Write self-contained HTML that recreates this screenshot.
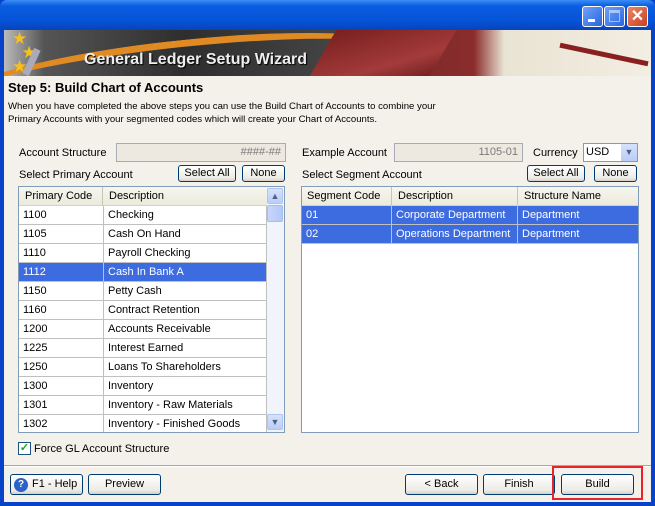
<!DOCTYPE html>
<html><head><style>
*{box-sizing:border-box;margin:0;padding:0}
body{width:655px;height:506px;overflow:hidden;font-family:"Liberation Sans",Arial,sans-serif;font-size:11px;background:#0842c8;position:relative;white-space:nowrap}
.abs{position:absolute}
.title{left:0;top:0;width:655px;height:30px;background:linear-gradient(#3b8df5,#0a5de0 20%,#0653d8 70%,#0843b8);border-radius:7px 7px 0 0}
.client{left:4px;top:30px;width:647px;height:472px;background:#f3f1ea}
.tb{top:6px;width:21px;height:21px;border:1px solid #fff;border-radius:3px;background:linear-gradient(135deg,#6fa2f8,#2a64e0)}
.banner{left:4px;top:30px;width:647px;height:46px;background:linear-gradient(90deg,#bbb 0,#555 40px,#2e2e2e 180px,#444 330px,#666 380px,#7a2a2a 400px,#8b2c2c 470px,#e9e3d3 500px,#f3eee2 647px);overflow:hidden}
.btn{position:absolute;height:21px;border:1px solid #003c74;border-radius:3px;background:linear-gradient(#fff,#ecebe6 80%,#d6d0c5);text-align:center;line-height:19px;font-size:11px;color:#000}
.grid{position:absolute;background:#fff;border:1px solid #7f9db9;overflow:hidden}
.hdr{position:absolute;top:0;height:19px;background:linear-gradient(#f7f6f0,#ebeadb);border-bottom:1px solid #d6d2c2;line-height:19px;padding-left:6px;color:#000}
.row{position:absolute;left:0;height:19px;line-height:18px;border-bottom:1px solid #c0c0c0}
.row span{position:absolute;top:0;height:19px;padding-left:4px;border-right:1px solid #c0c0c0}
.sel{background:#3d6be0;color:#fff}
.field{position:absolute;height:19px;border:1px solid #a5acb5;background:#ede9e0;color:#7a7a7a;text-align:right;padding-right:4px;line-height:17px}
</style></head><body>
<div class="abs title"></div>
<div class="abs tb" style="left:582px"><div style="position:absolute;left:5px;top:12px;width:7px;height:3px;background:#fff"></div></div>
<div class="abs tb" style="left:604px"><div style="position:absolute;left:4px;top:3px;width:11px;height:12px;border:1px solid #fff;border-top-width:3px;opacity:.5"></div></div>
<div class="abs tb" style="left:627px;background:linear-gradient(135deg,#e8886a,#c94020);color:#fff;font-weight:bold;font-size:16px;text-align:center;line-height:19px">✕</div>
<div class="abs client"></div>
<div class="abs banner">
 <div style="position:absolute;left:-60px;top:10px;width:480px;height:80px;border-top:7px solid #e08a24;border-radius:50%;transform:rotate(-6deg)"></div>
 <div style="position:absolute;left:80px;top:21px;font:bold 16px 'Liberation Sans',Arial,sans-serif;color:#eee;text-shadow:1px 1px 1px #000">General Ledger Setup Wizard</div>
 <div style="position:absolute;left:8px;top:2px;color:#f5c020;font-size:17px;line-height:14px">★<br>&nbsp;&nbsp;★<br>★</div>
 <div style="position:absolute;left:24px;top:18px;width:7px;height:28px;background:#aab;transform:rotate(25deg)"></div>
 <div style="position:absolute;left:315px;top:0;width:120px;height:60px;background:linear-gradient(160deg,#7a1f1f,#a33b3b 60%,#5e1515);transform:skewX(-30deg)"></div>
 <div style="position:absolute;left:555px;top:22px;width:90px;height:5px;background:#8a1f1f;transform:rotate(12deg)"></div>
</div>
<div class="abs" style="left:8px;top:80px;font:bold 13px 'Liberation Sans',Arial,sans-serif">Step 5: Build Chart of Accounts</div>
<div class="abs" style="left:8px;top:100px;font-size:9.6px;line-height:13px">When you have completed the above steps you can use the Build Chart of Accounts to combine your<br>Primary Accounts with your segmented codes which will create your Chart of Accounts.</div>

<div class="abs" style="left:19px;top:147px">Account Structure</div>
<div class="field" style="left:116px;top:143px;width:170px">####-##</div>
<div class="abs" style="left:19px;top:169px">Select Primary Account</div>
<div class="btn" style="left:178px;top:165px;width:58px;height:17px;line-height:15px">Select All</div>
<div class="btn" style="left:242px;top:165px;width:43px;height:17px;line-height:15px">None</div>

<div class="grid" style="left:18px;top:186px;width:267px;height:247px">
 <div class="hdr" style="left:0;width:84px;border-right:1px solid #c8c5b5">Primary Code</div>
 <div class="hdr" style="left:84px;width:164px">Description</div>
 <div style="position:absolute;left:248px;top:0;width:17px;height:245px;background:#f2f4fb">
  <div style="position:absolute;top:1px;left:0;width:16px;height:16px;border-radius:2px;background:linear-gradient(#d6e2fc,#b9cdf7);border:1px solid #b0c4f0;color:#4d6185;text-align:center;font-size:9px;line-height:14px">▲</div>
  <div style="position:absolute;top:18px;left:0;width:16px;height:17px;border-radius:2px;background:linear-gradient(90deg,#c6d6fc,#b2c8f7);border:1px solid #a8bdea"></div>
  <div style="position:absolute;top:227px;left:0;width:16px;height:16px;border-radius:2px;background:linear-gradient(#d6e2fc,#b9cdf7);border:1px solid #b0c4f0;color:#4d6185;text-align:center;font-size:9px;line-height:14px">▼</div>
 </div>
 <div style="position:absolute;left:0;top:19px;width:248px">
 <div class="row" style="top:0;width:248px"><span style="left:0;width:85px">1100</span><span style="left:85px;width:163px">Checking</span></div>
 <div class="row" style="top:19px;width:248px"><span style="left:0;width:85px">1105</span><span style="left:85px;width:163px">Cash On Hand</span></div>
 <div class="row" style="top:38px;width:248px"><span style="left:0;width:85px">1110</span><span style="left:85px;width:163px">Payroll Checking</span></div>
 <div class="row sel" style="top:57px;width:248px"><span style="left:0;width:85px">1112</span><span style="left:85px;width:163px">Cash In Bank A</span></div>
 <div class="row" style="top:76px;width:248px"><span style="left:0;width:85px">1150</span><span style="left:85px;width:163px">Petty Cash</span></div>
 <div class="row" style="top:95px;width:248px"><span style="left:0;width:85px">1160</span><span style="left:85px;width:163px">Contract Retention</span></div>
 <div class="row" style="top:114px;width:248px"><span style="left:0;width:85px">1200</span><span style="left:85px;width:163px">Accounts Receivable</span></div>
 <div class="row" style="top:133px;width:248px"><span style="left:0;width:85px">1225</span><span style="left:85px;width:163px">Interest Earned</span></div>
 <div class="row" style="top:152px;width:248px"><span style="left:0;width:85px">1250</span><span style="left:85px;width:163px">Loans To Shareholders</span></div>
 <div class="row" style="top:171px;width:248px"><span style="left:0;width:85px">1300</span><span style="left:85px;width:163px">Inventory</span></div>
 <div class="row" style="top:190px;width:248px"><span style="left:0;width:85px">1301</span><span style="left:85px;width:163px">Inventory - Raw Materials</span></div>
 <div class="row" style="top:209px;width:248px"><span style="left:0;width:85px">1302</span><span style="left:85px;width:163px">Inventory - Finished Goods</span></div>
 </div>
</div>

<div class="abs" style="left:302px;top:147px">Example Account</div>
<div class="field" style="left:394px;top:143px;width:129px">1105-01</div>
<div class="abs" style="left:533px;top:147px">Currency</div>
<div style="position:absolute;left:583px;top:143px;width:55px;height:19px;border:1px solid #7f9db9;background:#fff;line-height:17px;padding-left:2px">USD<div style="position:absolute;right:0;top:0;width:16px;height:17px;background:linear-gradient(#d6e2fc,#b9cdf7);color:#4d6185;text-align:center;font-size:9px">▼</div></div>
<div class="abs" style="left:302px;top:169px">Select Segment Account</div>
<div class="btn" style="left:527px;top:165px;width:58px;height:17px;line-height:15px">Select All</div>
<div class="btn" style="left:594px;top:165px;width:43px;height:17px;line-height:15px">None</div>

<div class="grid" style="left:301px;top:186px;width:338px;height:247px">
 <div class="hdr" style="left:0;width:90px;border-right:1px solid #c8c5b5;padding-left:5px">Segment Code</div>
 <div class="hdr" style="left:90px;width:126px;border-right:1px solid #c8c5b5">Description</div>
 <div class="hdr" style="left:216px;width:120px">Structure Name</div>
 <div class="row sel" style="top:19px;width:336px"><span style="left:0;width:90px">01</span><span style="left:90px;width:126px">Corporate Department</span><span style="left:216px;width:120px;border:0">Department</span></div>
 <div class="row sel" style="top:38px;width:336px"><span style="left:0;width:90px">02</span><span style="left:90px;width:126px">Operations Department</span><span style="left:216px;width:120px;border:0">Department</span></div>
</div>

<div style="position:absolute;left:18px;top:442px;width:13px;height:13px;border:1px solid #1c5180;background:#fff;color:#21a121;font-size:11px;line-height:11px;text-align:center;font-weight:bold">✓</div>
<div class="abs" style="left:34px;top:443px">Force GL Account Structure</div>
<div class="abs" style="left:4px;top:465px;width:647px;height:1px;background:#aca899"></div>
<div class="abs" style="left:4px;top:466px;width:647px;height:1px;background:#fff"></div>

<div class="btn" style="left:10px;top:474px;width:73px"><div style="position:absolute;left:3px;top:3px;width:14px;height:14px;border-radius:50%;background:#2a62c8;color:#fff;text-align:center;line-height:14px;font-weight:bold;font-size:10px">?</div><div style="position:absolute;left:21px;top:0">F1 - Help</div></div>
<div class="btn" style="left:88px;top:474px;width:73px">Preview</div>
<div class="btn" style="left:405px;top:474px;width:73px">&lt; Back</div>
<div class="btn" style="left:483px;top:474px;width:72px">Finish</div>
<div class="btn" style="left:561px;top:474px;width:73px">Build</div>
<div class="abs" style="left:552px;top:466px;width:91px;height:34px;border:2px solid #e8242a"></div>
</body></html>
